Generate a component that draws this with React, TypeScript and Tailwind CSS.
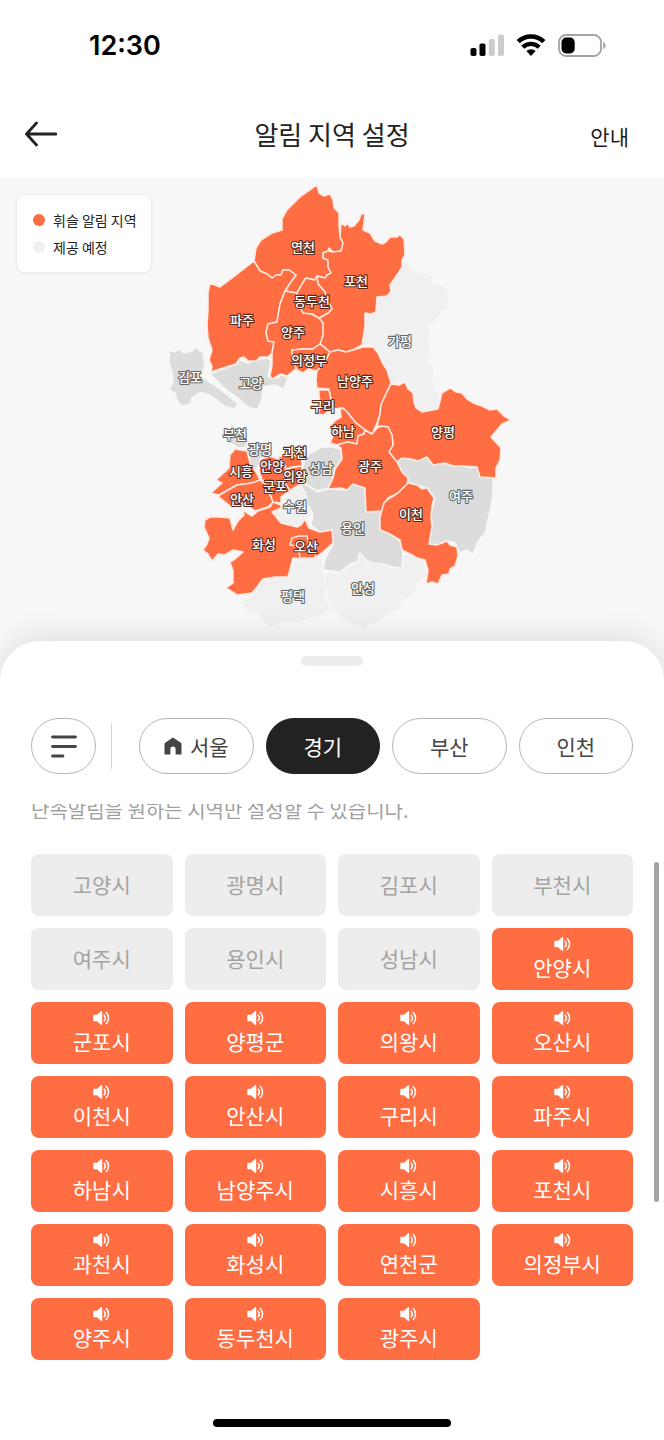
import React, { useState } from "react";

type Tone = "on" | "off" | "soft";

interface Region {
  name: string;
  tone: Tone;
  x: number;
  y: number;
  points: string;
}

const FILL: Record<Tone, string> = {
  on: "fill-[#ff6d43]",
  off: "fill-[#dcdcdc]",
  soft: "fill-[#f0f0f0]",
};

const REGIONS: Region[] = [
  {
    name: "가평", tone: "soft", x: 400, y: 341,
    points: "407,260 410,267 413,272 421,272 430,274 433,278 432,284 440,285 447,287 449,296 448,309 443,312 435,321 429,325 430,333 428,340 431,347 432,357 425,362 435,365 434,376 433,383 440,397 438,409 422,412 415,407 413,392 405,381 392,384 385,366 378,351 373,346 362,344 364,327 365,314 375,313 377,297 389,293 390,285 397,275 402,265",
  },
  {
    name: "평택", tone: "soft", x: 293, y: 596,
    points: "295,559 304,560 316,558 322,558 323,572 326,577 324,584 327,590 325,597 329,603 330,610 320,617 309,618 300,623 283,622 270,628 264,622 257,613 247,611 238,602 253,595 262,580 288,577",
  },
  {
    name: "안성", tone: "soft", x: 363, y: 588,
    points: "360,553 366,560 372,562 382,564 392,567 402,568 403,554 412,555 425,562 427,577 418,583 416,592 404,600 398,611 388,615 377,623 368,625 365,632 356,625 345,622 338,614 330,611 331,604 326,598 327,590 324,584 326,573 340,572 357,562",
  },
  {
    name: "수원", tone: "soft", x: 295, y: 506,
    points: "291,490 303,487 307,496 309,507 313,514 306,521 299,527 289,525 281,522 272,512 281,507",
  },
  {
    name: "김포", tone: "off", x: 190, y: 377,
    points: "169,350 175,352 179,349 184,353 192,351 197,347 200,351 203,352 204,360 205,367 199,375 208,381 220,389 238,404 235,409 226,407 217,400 209,395 200,392 192,398 190,404 181,406 177,400 175,393 169,390 173,382 172,372 169,363",
  },
  {
    name: "고양", tone: "off", x: 251, y: 383,
    points: "210,374 223,369 237,364 240,360 248,363 260,359 268,358 271,361 268,377 278,378 281,374 288,378 284,389 275,385 263,387 262,400 257,410 248,407 238,398 224,388",
  },
  {
    name: "부천", tone: "off", x: 235, y: 434,
    points: "231,422 235,427 242,429 246,435 247,447 238,448 228,442 226,434 230,431",
  },
  {
    name: "광명", tone: "off", x: 260, y: 449,
    points: "248,447 252,442 262,443 271,449 270,456 261,458 258,466 255,471 250,463 249,456",
  },
  {
    name: "성남", tone: "off", x: 321, y: 468,
    points: "309,453 315,451 321,447 332,447 341,449 342,459 335,469 333,479 328,488 317,491 307,485 302,474 304,462",
  },
  {
    name: "용인", tone: "off", x: 353, y: 528,
    points: "300,483 307,485 317,492 328,489 347,490 353,484 365,488 366,512 382,511 380,530 388,533 400,541 403,550 402,568 392,567 382,564 372,563 366,560 360,553 357,562 350,564 340,572 323,570 325,560 328,553 333,545 332,530 320,532 311,525 313,514 308,505 305,493",
  },
  {
    name: "여주", tone: "off", x: 461, y: 496,
    points: "397,462 402,458 411,459 418,461 427,457 433,465 445,463 453,466 463,466 470,468 477,467 480,477 493,478 493,493 491,507 488,520 485,533 478,541 473,554 467,550 460,553 455,543 447,541 437,545 429,544 432,527 431,513 435,498 427,488 417,485 408,482 408,478 402,472",
  },
  {
    name: "연천", tone: "on", x: 303, y: 247,
    points: "317,185 319,193 324,196 330,194 333,200 334,208 339,213 339,225 340,237 343,243 341,251 333,252 329,248 328,251 323,253 323,258 328,260 328,267 331,273 327,275 325,278 317,276 315,280 306,278 302,284 297,293 285,291 290,283 296,275 289,270 283,270 281,275 276,275 272,278 267,274 260,271 254,261 256,248 261,240 272,233 282,230 282,219 287,210 300,197",
  },
  {
    name: "포천", tone: "on", x: 356, y: 281,
    points: "341,223 345,226 347,223 350,227 354,226 359,220 361,214 365,214 364,222 363,230 370,233 375,241 382,244 386,242 390,237 397,237 400,235 404,239 405,255 402,260 402,267 399,272 390,285 391,291 387,296 377,297 376,312 371,314 365,313 365,326 362,345 353,350 346,352 338,350 330,352 323,346 320,344 323,335 323,323 319,318 328,313 332,309 328,301 325,292 318,284 317,276 325,278 327,275 331,273 328,267 328,260 323,258 323,253 328,251 333,252 341,251 343,243 340,237",
  },
  {
    name: "파주", tone: "on", x: 242, y: 320,
    points: "254,261 260,271 267,274 272,278 276,275 281,275 283,270 289,270 296,275 290,283 285,291 280,304 277,322 268,324 266,333 268,341 274,342 272,353 268,357 260,357 256,361 248,361 244,357 240,358 236,364 223,368 211,372 212,366 209,360 212,350 208,338 207,325 208,310 208,293 210,283 220,287 236,275",
  },
  {
    name: "양주", tone: "on", x: 293, y: 332,
    points: "285,291 297,293 299,305 303,313 312,314 319,318 323,323 323,335 320,344 313,349 303,349 292,350 292,358 297,368 287,376 281,374 272,379 270,376 272,365 272,353 274,342 268,341 266,333 268,324 277,322 280,304",
  },
  {
    name: "동두천", tone: "on", x: 312, y: 301,
    points: "306,278 315,280 317,276 318,284 325,292 328,301 332,309 328,313 319,318 312,314 303,313 299,305 297,293 302,284",
  },
  {
    name: "의정부", tone: "on", x: 309, y: 360,
    points: "292,350 303,349 313,349 320,344 330,352 325,362 317,371 308,369 303,373 297,370 292,358",
  },
  {
    name: "남양주", tone: "on", x: 355, y: 381,
    points: "330,352 338,350 346,352 353,350 363,347 373,347 378,353 382,362 387,370 391,383 385,396 381,405 380,414 377,423 372,434 365,430 355,422 348,413 343,408 334,409 331,400 329,389 317,388 316,380 317,371 325,362",
  },
  {
    name: "구리", tone: "on", x: 323, y: 406,
    points: "319,390 329,390 331,400 334,409 329,411 323,415 318,414 321,405 319,397",
  },
  {
    name: "하남", tone: "on", x: 343, y: 431,
    points: "340,408 344,409 348,413 355,422 365,430 364,434 358,436 357,444 348,442 337,445 330,443 333,436 335,432 329,427 336,420 341,417",
  },
  {
    name: "양평", tone: "on", x: 443, y: 432,
    points: "391,384 399,385 405,382 408,389 413,393 414,402 416,408 422,412 438,409 440,401 442,393 450,388 456,392 462,393 467,399 473,403 482,406 490,410 497,409 504,416 511,420 502,424 497,430 491,437 501,448 500,460 496,468 496,478 480,477 477,467 463,466 453,466 445,463 433,465 427,457 418,461 411,459 402,458 397,462 389,452 393,445 392,435 388,427 377,426 380,414 381,405 385,396",
  },
  {
    name: "광주", tone: "on", x: 370, y: 466,
    points: "372,434 377,428 382,426 388,427 392,435 393,445 389,452 397,462 402,472 408,478 407,485 398,493 388,498 384,503 382,511 366,512 365,488 353,484 347,490 341,488 328,489 333,478 335,469 342,459 341,448 337,445 348,442 357,444 358,436 364,434 365,430",
  },
  {
    name: "이천", tone: "on", x: 411, y: 514,
    points: "408,483 417,485 422,489 427,488 434,498 432,506 431,517 432,527 429,544 437,545 447,541 450,545 457,547 458,556 455,566 450,569 449,574 442,575 438,584 432,582 426,584 428,570 425,560 417,558 412,555 402,550 400,540 388,533 380,530 380,517 384,503 390,498 398,493",
  },
  {
    name: "화성", tone: "on", x: 264, y: 544,
    points: "243,510 247,513 252,516 258,511 270,507 273,502 281,505 281,508 272,512 277,518 281,523 289,525 297,527 301,525 305,519 309,528 320,532 332,530 333,543 323,552 315,558 304,559 293,558 288,577 275,577 263,579 257,587 252,593 237,595 226,588 233,583 233,571 230,562 235,559 243,552 233,550 225,555 218,554 212,561 208,554 203,550 207,544 209,538 204,527 205,520 210,517 220,517 230,518 233,530 238,521 244,515",
  },
  {
    name: "오산", tone: "on", x: 306, y: 546,
    points: "292,538 299,536 307,536 308,542 317,547 315,558 300,558 298,546 290,545",
  },
  {
    name: "시흥", tone: "on", x: 241, y: 471,
    points: "235,449 247,451 250,463 256,472 260,480 252,483 237,485 228,490 219,495 211,493 222,483 216,480 229,468 230,455",
  },
  {
    name: "안산", tone: "on", x: 242, y: 499,
    points: "218,496 228,490 237,485 252,483 260,480 267,486 270,494 273,502 268,507 255,511 251,508 247,505 240,503 231,507",
  },
  {
    name: "안양", tone: "on", x: 272, y: 466,
    points: "261,459 270,456 275,458 283,460 286,469 283,481 273,482 262,480 259,470",
  },
  {
    name: "과천", tone: "on", x: 295, y: 452,
    points: "276,458 284,455 287,449 295,456 301,456 302,466 292,467 286,469 283,460",
  },
  {
    name: "의왕", tone: "on", x: 295, y: 476,
    points: "286,469 301,466 305,475 301,484 292,489 288,494 283,481",
  },
  {
    name: "군포", tone: "on", x: 275, y: 486,
    points: "262,481 273,482 283,481 290,490 281,497 281,503 273,502 270,494 267,486",
  },
];

const TABS = ["서울", "경기", "부산", "인천"];

const UPCOMING = ["고양시", "광명시", "김포시", "부천시", "여주시", "용인시", "성남시"];

const ACTIVE = [
  "안양시", "군포시", "양평군", "의왕시", "오산시", "이천시", "안산시", "구리시",
  "파주시", "하남시", "남양주시", "시흥시", "포천시", "과천시", "화성시", "연천군",
  "의정부시", "양주시", "동두천시", "광주시",
];

function StatusBar() {
  return (
    <div className="flex h-[90px] items-center justify-between pr-[58px] pl-[89px]">
      <span className="pt-0.5 font-['Inter',sans-serif] text-[27px] leading-8 font-semibold text-black">12:30</span>
      <div className="flex items-center gap-3">
        <svg className="h-[22px] w-[34px]" viewBox="0 0 34 22" aria-hidden="true">
          <rect x="0.500" y="14" width="6" height="8" rx="1.800" fill="#000" />
          <rect x="9.500" y="9.500" width="6" height="12.500" rx="1.800" fill="#000" />
          <rect x="18.800" y="5" width="6" height="17" rx="1.800" fill="#ccc" />
          <rect x="28" y="0.500" width="6" height="21.500" rx="1.800" fill="#ccc" />
        </svg>
        <svg className="h-[22px] w-[30px]" viewBox="0 0 30 22" aria-hidden="true" fill="none" stroke="#000">
          <path d="M2.200 7.700a18.300 18.300 0 0 1 25.600 0" strokeWidth="4.600" />
          <path d="M6.800 13.200a11.700 11.700 0 0 1 16.400 0" strokeWidth="4.200" />
          <path d="M15 22l-4.600-5a6.600 6.600 0 0 1 9.200 0z" fill="#000" stroke="none" />
        </svg>
        <svg className="h-[23px] w-[48px]" viewBox="0 0 48 23" aria-hidden="true">
          <rect x="1" y="1" width="42" height="21" rx="7" fill="none" stroke="#a3a3a3" strokeWidth="1.800" />
          <rect x="3.500" y="3.600" width="13.200" height="15.800" rx="4.600" fill="#000" />
          <path d="M45.200 8v7c1.600-.6 2.400-2 2.400-3.500s-.8-2.900-2.400-3.500z" fill="#a3a3a3" />
        </svg>
      </div>
    </div>
  );
}

function TitleBar() {
  return (
    <header className="grid h-[88px] grid-cols-[1fr_auto_1fr] items-center px-[25px] text-[#222]">
      <button type="button" aria-label="뒤로" className="justify-self-start">
        <svg className="h-7 w-8" viewBox="0 0 32 28" fill="none" stroke="#222" strokeWidth="2.800" strokeLinecap="round" strokeLinejoin="round">
          <path d="M31 14H2M11.500 3L1.500 14l10 11" />
        </svg>
      </button>
      <h1 className="text-[26px] leading-9">알림 지역 설정</h1>
      <button type="button" className="justify-self-end pt-1 pr-[10px] text-[21px] leading-7">안내</button>
    </header>
  );
}

function RegionMap() {
  return (
    <section className="relative" aria-label="경기 지도">
      <svg className="block w-full" viewBox="0 178 664 463" role="img" aria-label="알림 지역 지도">
        {REGIONS.map((r) => (
          <polygon
            key={r.name}
            points={r.points}
            className={FILL[r.tone] + (r.tone === "on" ? " stroke-[#ffe9e2]" : " stroke-[#f7f7f7]")}
            strokeWidth="1.500"
            strokeLinejoin="round"
          />
        ))}
        {REGIONS.map((r) => (
          <text
            key={r.name}
            x={r.x}
            y={r.y + 4.500}
            textAnchor="middle"
            className={
              "fill-white text-[13px] font-medium " +
              (r.tone === "on" ? "stroke-[#5c2a1c]" : "stroke-[#666666]")
            }
            strokeWidth="2.200"
            strokeLinejoin="round"
            paintOrder="stroke"
          >
            {r.name}
          </text>
        ))}
      </svg>
      <ul className="absolute top-4 left-4 flex flex-col gap-[7px] rounded-lg border border-[#ededed] bg-white py-[15px] pr-[14px] pl-4 text-[14px] leading-5 text-[#222] shadow-xs">
        <li className="flex items-center gap-2">
          <span className="size-3 rounded-full bg-[#ff6d43]" />
          휘슬 알림 지역
        </li>
        <li className="flex items-center gap-2">
          <span className="size-3 rounded-full bg-[#f0f0f0]" />
          제공 예정
        </li>
      </ul>
    </section>
  );
}

function HomeIcon() {
  return (
    <svg className="size-[18px]" viewBox="0 0 18 18" fill="#444" aria-hidden="true">
      <path d="M9 .4L16.800 5.800c.4.300.700.700.700 1.200V16.800c0 .4-.3.700-.7.700H11.600V12.200a2.600 2.600 0 0 0-5.200 0v5.300H1.200c-.4 0-.7-.3-.7-.7V7c0-.5.300-.9.700-1.200z" />
    </svg>
  );
}

function SpeakerIcon() {
  return (
    <svg className="h-[14px] w-[17px]" viewBox="0 0 17 14" fill="none" stroke="#fff" strokeLinecap="round" aria-hidden="true">
      <path d="M.3 4.800c0-.6.4-1 1-1H4L8 .2c.5-.4 1.200-.1 1.200.6v12.400c0 .7-.7 1-1.200.6l-4-3.600H1.300c-.6 0-1-.4-1-1z" fill="#fff" stroke="none" />
      <path d="M11.300 4.200c1.300 1.700 1.300 3.900 0 5.600" strokeWidth="1.500" />
      <path d="M13.300 1.500c3 3.200 3 7.800 0 11" strokeWidth="1.500" />
    </svg>
  );
}

export default function App() {
  const [tab, setTab] = useState("경기");
  const [enabled, setEnabled] = useState<string[]>(ACTIVE);

  const toggle = (name: string) =>
    setEnabled((cur) => (cur.includes(name) ? cur.filter((n) => n !== name) : [...cur, name]));

  return (
    <div className="flex min-h-screen flex-col bg-white font-['Noto_Sans_CJK_KR',sans-serif]">
      <StatusBar />
      <TitleBar />
      <main className="flex flex-1 flex-col bg-[#f7f7f7]">
        <RegionMap />
        <section className="relative flex flex-1 flex-col rounded-t-[40px] bg-white pt-[15px] shadow-[0_-4px_32px_rgba(0,0,0,0.1)]">
          <div className="mx-auto h-[10px] w-[62px] rounded-full bg-[#ededed]" />

          <nav className="mt-[52px] flex items-center px-[31px]" aria-label="지역">
            <button type="button" aria-label="전체 지역" className="flex h-14 w-[65px] items-center justify-center rounded-full border border-[#b5b5b5]">
              <svg className="h-[23px] w-[26px]" viewBox="0 0 26 23" stroke="#444" strokeWidth="2.800" strokeLinecap="round" aria-hidden="true">
                <path d="M1.500 2h23M1.500 11.500h23M1.500 21h10.500" />
              </svg>
            </button>
            <span className="mr-[27px] ml-[15px] h-[46px] w-px bg-[#d5d5d5]" />
            <div className="grid flex-1 grid-cols-4 gap-3">
              {TABS.map((t) => (
                <button
                  key={t}
                  type="button"
                  aria-pressed={tab === t}
                  onClick={() => setTab(t)}
                  className={
                    "flex h-14 items-center justify-center gap-2 rounded-full border text-[21px] leading-7 " +
                    (tab === t ? "border-[#222222] bg-[#222222] text-white" : "border-[#b5b5b5] bg-white text-[#444444]")
                  }
                >
                  {t === "서울" && <HomeIcon />}
                  {t}
                </button>
              ))}
            </div>
          </nav>

          <div className="relative mt-[30px] overflow-hidden px-[31px]">
            <p className="-mt-2 text-[20px] leading-7 text-[#a0a0a0]">단속알림을 원하는 지역만 설정할 수 있습니다.</p>
            <div className="mt-[30px] grid grid-cols-4 gap-3">
              {UPCOMING.map((name) => (
                <button
                  key={name}
                  type="button"
                  disabled
                  className="flex h-[62px] items-center justify-center rounded-lg bg-[#ededed] pb-[3px] text-[21px] leading-6 text-[#a3a3a3]"
                >
                  {name}
                </button>
              ))}
              {ACTIVE.map((name) => (
                <button
                  key={name}
                  type="button"
                  aria-pressed={enabled.includes(name)}
                  onClick={() => toggle(name)}
                  className={
                    "flex h-[62px] flex-col items-center justify-center gap-1 rounded-lg pb-[2px] text-[21px] leading-6 " +
                    (enabled.includes(name) ? "bg-[#ff6d43] text-white" : "bg-[#ededed] text-[#444444]")
                  }
                >
                  {enabled.includes(name) && <SpeakerIcon />}
                  {name}
                </button>
              ))}
            </div>
            <span className="absolute top-[58px] right-[5px] h-[340px] w-[5px] rounded-full bg-[#a3a3a3]" />
          </div>

          <div className="mx-auto mt-auto mb-[13px] h-2 w-[238px] rounded-full bg-black" />
        </section>
      </main>
    </div>
  );
}
